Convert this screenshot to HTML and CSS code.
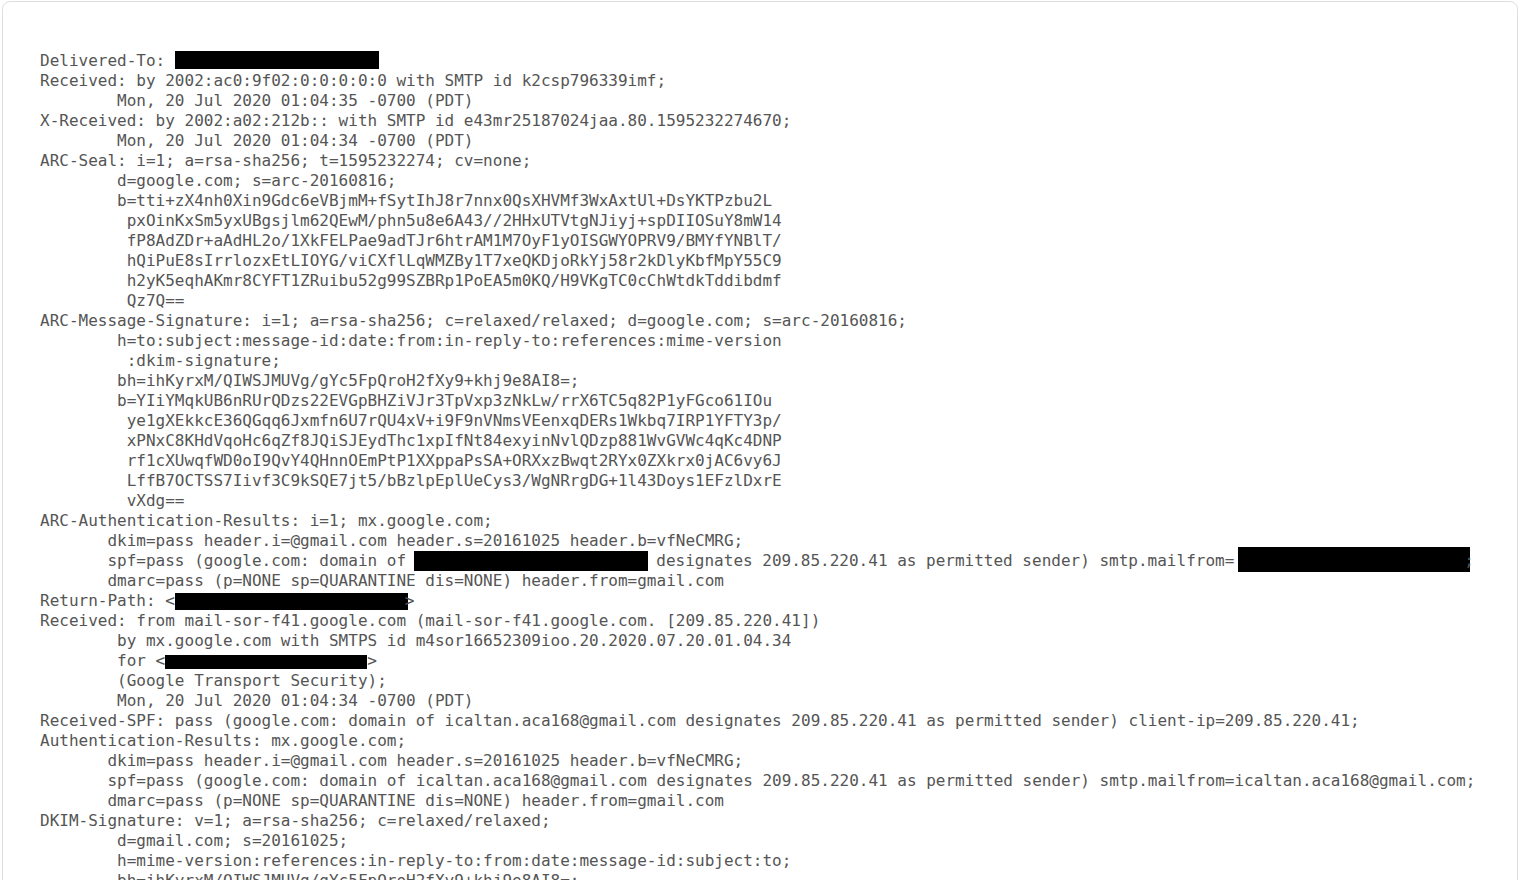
FILE: index.html
```html
<!DOCTYPE html>
<html lang="en">

<head>
    <meta charset="UTF-8">
    <meta name="viewport" content="width=device-width, initial-scale=1.0">
    <title>Original Message</title>
    <link rel="stylesheet" href="styles.css">
</head>

<body>

    <div class="message-card">
<pre class="raw-source">Delivered-To: <span class="redact to-box"></span>
Received: by 2002:ac0:9f02:0:0:0:0:0 with SMTP id k2csp796339imf;
        Mon, 20 Jul 2020 01:04:35 -0700 (PDT)
X-Received: by 2002:a02:212b:: with SMTP id e43mr25187024jaa.80.1595232274670;
        Mon, 20 Jul 2020 01:04:34 -0700 (PDT)
ARC-Seal: i=1; a=rsa-sha256; t=1595232274; cv=none;
        d=google.com; s=arc-20160816;
        b=tti+zX4nh0Xin9Gdc6eVBjmM+fSytIhJ8r7nnx0QsXHVMf3WxAxtUl+DsYKTPzbu2L
         pxOinKxSm5yxUBgsjlm62QEwM/phn5u8e6A43//2HHxUTVtgNJiyj+spDIIOSuY8mW14
         fP8AdZDr+aAdHL2o/1XkFELPae9adTJr6htrAM1M7OyF1yOISGWYOPRV9/BMYfYNBlT/
         hQiPuE8sIrrlozxEtLIOYG/viCXflLqWMZBy1T7xeQKDjoRkYj58r2kDlyKbfMpY55C9
         h2yK5eqhAKmr8CYFT1ZRuibu52g99SZBRp1PoEA5m0KQ/H9VKgTC0cChWtdkTddibdmf
         Qz7Q==
ARC-Message-Signature: i=1; a=rsa-sha256; c=relaxed/relaxed; d=google.com; s=arc-20160816;
        h=to:subject:message-id:date:from:in-reply-to:references:mime-version
         :dkim-signature;
        bh=ihKyrxM/QIWSJMUVg/gYc5FpQroH2fXy9+khj9e8AI8=;
        b=YIiYMqkUB6nRUrQDzs22EVGpBHZiVJr3TpVxp3zNkLw/rrX6TC5q82P1yFGco61IOu
         ye1gXEkkcE36QGqq6Jxmfn6U7rQU4xV+i9F9nVNmsVEenxqDERs1Wkbq7IRP1YFTY3p/
         xPNxC8KHdVqoHc6qZf8JQiSJEydThc1xpIfNt84exyinNvlQDzp881WvGVWc4qKc4DNP
         rf1cXUwqfWD0oI9QvY4QHnnOEmPtP1XXppaPsSA+ORXxzBwqt2RYx0ZXkrx0jAC6vy6J
         LffB7OCTSS7Iivf3C9kSQE7jt5/bBzlpEplUeCys3/WgNRrgDG+1l43Doys1EFzlDxrE
         vXdg==
ARC-Authentication-Results: i=1; mx.google.com;
       dkim=pass header.i=@gmail.com header.s=20161025 header.b=vfNeCMRG;
       spf=pass (google.com: domain of <span class="redact spf-box"></span> designates 209.85.220.41 as permitted sender) smtp.mailfrom=<span class="redact from-box"></span>;
       dmarc=pass (p=NONE sp=QUARANTINE dis=NONE) header.from=gmail.com
Return-Path: &lt;<span class="redact path-box"></span>&gt;
Received: from mail-sor-f41.google.com (mail-sor-f41.google.com. [209.85.220.41])
        by mx.google.com with SMTPS id m4sor16652309ioo.20.2020.07.20.01.04.34
        for &lt;<span class="redact for-box"></span>&gt;
        (Google Transport Security);
        Mon, 20 Jul 2020 01:04:34 -0700 (PDT)
Received-SPF: pass (google.com: domain of icaltan.aca168@gmail.com designates 209.85.220.41 as permitted sender) client-ip=209.85.220.41;
Authentication-Results: mx.google.com;
       dkim=pass header.i=@gmail.com header.s=20161025 header.b=vfNeCMRG;
       spf=pass (google.com: domain of icaltan.aca168@gmail.com designates 209.85.220.41 as permitted sender) smtp.mailfrom=icaltan.aca168@gmail.com;
       dmarc=pass (p=NONE sp=QUARANTINE dis=NONE) header.from=gmail.com
DKIM-Signature: v=1; a=rsa-sha256; c=relaxed/relaxed;
        d=gmail.com; s=20161025;
        h=mime-version:references:in-reply-to:from:date:message-id:subject:to;
        bh=ihKyrxM/QIWSJMUVg/gYc5FpQroH2fXy9+khj9e8AI8=;
        b=pBq0vC4Tl0sQH1hxIy3p0ZgmZr9w8JxRfF7bq2XLcT5n3kM1eW6dAoPj4uVYs9GiNa</pre>
    </div>

</body>

</html>
```

FILE: styles.css
```css
html,
body {
    overflow: hidden;
}

body {
    margin: 0;
    padding: 1px 2px 0 2px;
    background-color: #fff;
}

.message-card {
    border: 1px solid #dedede;
    border-radius: 8px;
    background-color: #fff;
    padding: 49px 37px 40px 37px;
    min-height: 1000px;
}

.raw-source {
    margin: 0;
    font-family: "DejaVu Sans Mono", "Liberation Mono", monospace;
    font-size: 16px;
    line-height: 20px;
    color: #555;
    white-space: pre;
}

/* black boxes over the hidden addresses, kept inside the 20px line */
.redact {
    display: inline-block;
    background-color: #000;
    vertical-align: top;
}

.to-box {
    width: 204px;
    height: 18px;
    margin-right: -2px;
}

.spf-box {
    width: 234px;
    height: 20px;
    margin: 0 -1px 0 -2px;
}

.from-box {
    width: 232px;
    height: 20px;
    margin: 0 -6px 0 4px;
    box-shadow: 0 -4px 0 #000, 0 1px 0 #000;
}

.path-box {
    width: 233px;
    height: 17px;
    margin-top: 2px;
    margin-right: -3px;
}

.for-box {
    width: 202px;
    height: 14px;
    margin-top: 4px;
}
```
